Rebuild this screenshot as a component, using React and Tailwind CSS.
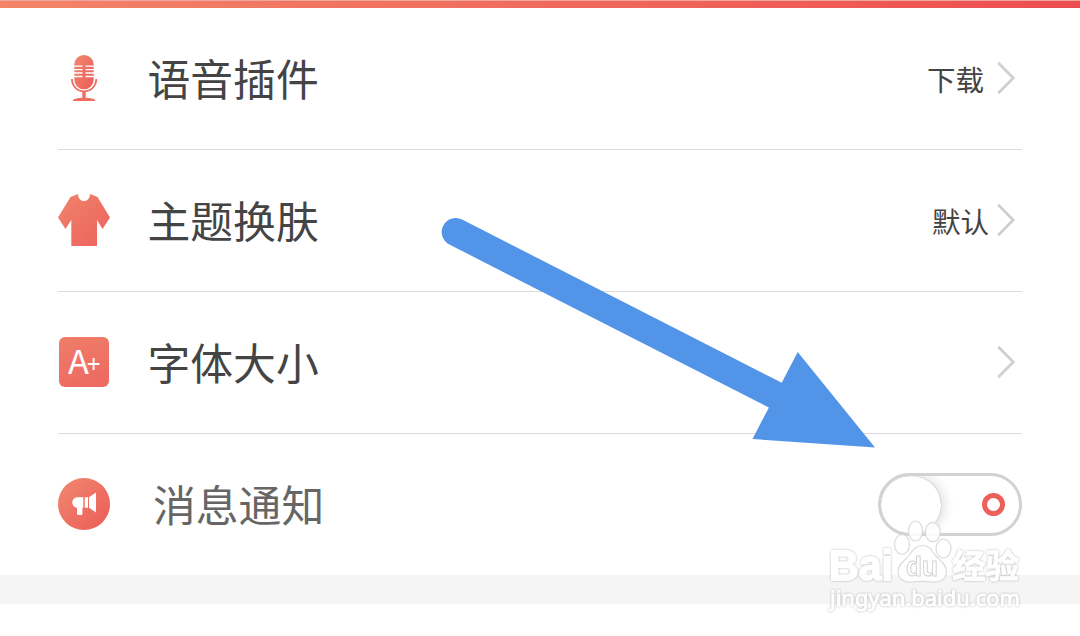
import React from "react";

const grad = (id) => (
  <defs>
    <linearGradient id={id} x1="0" y1="0" x2="1" y2="1">
      <stop offset="0" stopColor="#f0886f" />
      <stop offset="1" stopColor="#eb5c58" />
    </linearGradient>
  </defs>
);

function MicIcon() {
  return (
    <svg className="h-[52px] w-[52px]" viewBox="0 -1 52 52">
      {grad("mic")}
      <path fill="url(#mic)" d="M16.300 11.600a9.700 9.700 0 0 1 19.400 0V26.600a9.700 9.700 0 0 1-19.400 0z" />
      <path stroke="#fff" strokeWidth="1.300" d="M16 13.200h8.500M27.500 13.200H36M16 16.600h8.500M27.500 16.600H36M16 20h8.500M27.500 20H36M16 23.500h8.500M27.500 23.500H36" />
      <path fill="none" stroke="#ee7064" strokeWidth="1.900" d="M14 26v.3a12.100 12.100 0 0 0 24.200 0V26" />
      <path fill="#ee6c61" d="M24.300 38.500h3.400v6.200c3 .2 8.500.4 10 3.300H14.500c1.500-2.900 6.800-3.100 9.800-3.300z" />
    </svg>
  );
}

function ShirtIcon() {
  return (
    <svg className="h-[52px] w-[52px]" viewBox="0 0 52 52">
      <defs>
        <linearGradient id="shirt" x1="0" y1="0" x2="1" y2="1">
          <stop offset="0" stopColor="#f0836c" />
          <stop offset="1" stopColor="#ec625c" />
        </linearGradient>
      </defs>
      <path fill="url(#shirt)" d="M20 0C20 9.500 32 9.500 32 0L39.500 3 52 23.500 44.500 35 39 26V52H13.300V26L7.500 35 0 23.500 12.500 3z" />
    </svg>
  );
}

function FontIcon() {
  return (
    <svg className="h-[52px] w-[52px]" viewBox="0 0 52 52">
      <defs>
        <linearGradient id="font" x1="0" y1="0" x2="0.3" y2="1">
          <stop offset="0" stopColor="#f07d69" />
          <stop offset="1" stopColor="#ed6b62" />
        </linearGradient>
      </defs>
      <rect x="1" y="1" width="50" height="50" rx="6" fill="url(#font)" />
      <text x="10" y="38" fill="#fff" fontSize="33" textLength="21" lengthAdjust="spacingAndGlyphs" fontFamily="Noto Sans CJK SC, sans-serif">A</text>
      <path stroke="#fff" strokeWidth="1.900" d="M29.700 28H41.400M35.600 22V34" />
    </svg>
  );
}

function HornIcon() {
  return (
    <svg className="h-[52px] w-[52px]" viewBox="0 0 52 52">
      {grad("horn")}
      <circle cx="26" cy="26" r="26" fill="url(#horn)" />
      <path fill="#fff" d="M19 19.300H25.300V29.700H24.400V36q0 1-1 1H20q-1 0-1-1V29.700C16.500 29.500 14.300 27.300 14.300 24.500S16.500 19.500 19 19.300zM26.800 19.300h3.200v10.400h-3.200zM31 19.300L38 14.500V34.500L31 29.700z" />
    </svg>
  );
}

function Chevron() {
  return (
    <svg className="h-[34px] w-[19px]" viewBox="0 0 19 34" fill="none">
      <path d="M1.200 1.800L16.200 17 1.200 32.200" stroke="#cfcfcf" strokeWidth="2.800" />
    </svg>
  );
}

function Row({ icon, label, value, gap }) {
  return (
    <div className="mx-[58px] flex h-[142px] items-center border-b border-[#dcdcdc] pb-[2px]">
      {icon}
      <span className="ml-[37.500px] flex-1 pb-[2px] text-[42.800px] leading-[60px] text-[#444]">{label}</span>
      {value && <span className={`${gap} pt-[2px] text-[28.500px] leading-10 text-[#444]`}>{value}</span>}
      <span className="mr-[6px]"><Chevron /></span>
    </div>
  );
}

function Toggle() {
  return (
    <div className="mt-[2px] flex h-[63px] w-[144px] items-center justify-between overflow-hidden rounded-full border-[3px] border-[#d2d2d2] bg-white pr-[14px]">
      <div className="h-[58px] w-[60px] rounded-full bg-white shadow-[3px_0_12px_rgba(0,0,0,0.14),0_0_1px_rgba(0,0,0,0.4)]" />
      <div className="h-[23px] w-[23px] rounded-full border-[5px] border-[#ec6059]" />
    </div>
  );
}

function Watermark() {
  return (
    <svg className="absolute left-[820px] top-[515px] h-[100px] w-[210px] opacity-90" viewBox="0 0 210 100" fill="#fff">
      <g className="drop-shadow-[0_0_1px_rgba(0,0,0,0.32)]" stroke="#fff" strokeLinejoin="round">
        <text x="9" y="65" fontSize="43" fontWeight="bold" strokeWidth="1.800" textLength="64" lengthAdjust="spacingAndGlyphs" fontFamily="Liberation Sans, sans-serif">Bai</text>
        <text x="132" y="63" fontSize="33" fontWeight="bold" strokeWidth="0.800" textLength="67" lengthAdjust="spacingAndGlyphs" fontFamily="Noto Sans CJK SC, sans-serif">经验</text>
        <text x="10" y="91" fontSize="22.500" strokeWidth="1" textLength="190" lengthAdjust="spacingAndGlyphs" fontFamily="Noto Sans, sans-serif">jingyan.baidu.com</text>
      </g>
      <g stroke="#d8d8d8" strokeWidth="1.200">
        <ellipse cx="82" cy="29.500" rx="7.500" ry="10" />
        <ellipse cx="95.500" cy="16" rx="7" ry="10" />
        <ellipse cx="112.800" cy="17" rx="7.500" ry="9.700" />
        <ellipse cx="123.500" cy="33.500" rx="7.500" ry="9.500" />
        <path d="M102.500 30.500c-7 0-10 5-13.500 10-4 5.500-11 8-11 16 0 7.500 6 11 13 10.500 7-.8 15-.8 22 0 8 .5 13.500-3 13.500-10.500 0-7.500-6.500-10.500-11-16-4-5.500-6-10-13-10z" />
      </g>
      <text x="86" y="61" fontSize="27" fontWeight="bold" stroke="#cfcfcf" strokeWidth="1" textLength="32" lengthAdjust="spacingAndGlyphs" fontFamily="Liberation Sans, sans-serif">du</text>
    </svg>
  );
}

export default function App() {
  return (
    <div className="relative h-[636px] w-[1080px] overflow-hidden bg-white font-['Noto_Sans_CJK_SC',sans-serif]">
      <div className="h-2 border-t border-[#efa79f] bg-linear-to-r from-[#f28468] to-[#ed4d50]" />
      <Row icon={<MicIcon />} label="语音插件" value="下载" gap="mr-[13px]" />
      <Row icon={<ShirtIcon />} label="主题换肤" value="默认" gap="mr-[8px]" />
      <Row icon={<FontIcon />} label="字体大小" />
      <div className="mx-[58px] flex h-[141px] items-center pb-[2px]">
        <HornIcon />
        <span className="ml-[43px] flex-1 pb-[2px] text-[42.800px] leading-[60px] text-[#666]">消息通知</span>
        <Toggle />
      </div>
      <div className="h-[29px] bg-[#f5f5f5]" />
      <svg className="absolute left-[430px] top-[200px] h-[260px] w-[460px]" viewBox="0 0 460 260">
        <path d="M25.700 32L346 195.500" stroke="#5294e8" strokeWidth="28" strokeLinecap="round" />
        <path d="M367.700 152L445 247.500 322.500 239z" fill="#5294e8" />
      </svg>
      <Watermark />
    </div>
  );
}
